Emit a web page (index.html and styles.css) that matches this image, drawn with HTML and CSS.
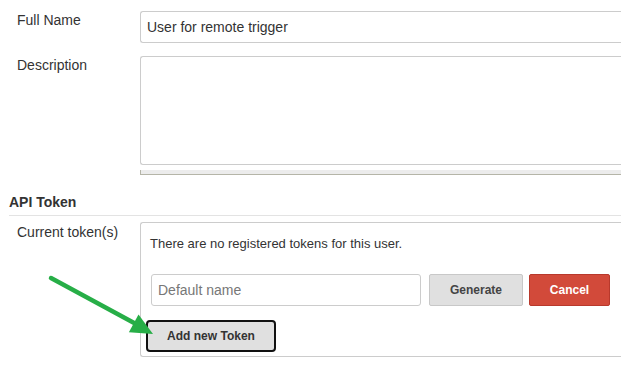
FILE: index.html
```html
<!DOCTYPE html>
<html lang="en">
<head>
  <meta charset="UTF-8">
  <title>User configuration</title>
  <link rel="stylesheet" href="styles.css">
</head>
<body>

  <div class="form">
    <div class="row first">
      <div class="label">Full Name</div>
      <div class="field">
        <input class="text-input wide" type="text" value="User for remote trigger">
      </div>
    </div>

    <div class="row">
      <div class="label">Description</div>
      <div class="field">
        <textarea class="text-area"></textarea>
        <div class="textarea-grip"></div>
      </div>
    </div>

    <div class="section-header">API Token</div>

    <div class="row token-row">
      <div class="label">Current token(s)</div>
      <div class="field token-box">
        <div class="token-note">There are no registered tokens for this user.</div>
        <div class="token-controls">
          <input class="text-input token-name" type="text" placeholder="Default name">
          <button class="btn btn-generate">Generate</button>
          <button class="btn btn-cancel">Cancel</button>
        </div>
        <button class="btn btn-add">Add new Token</button>
      </div>
    </div>
  </div>

  <!-- annotation arrow -->
  <svg class="annotation" width="621" height="369" viewBox="0 0 621 369">
    <line x1="51" y1="278" x2="136" y2="324" stroke="#27ae47" stroke-width="4.5" stroke-linecap="round"/>
    <polygon points="153,334 128.9,332.2 138.5,314.6" fill="#27ae47"/>
  </svg>

</body>
</html>
```

FILE: styles.css
```css
* {
  box-sizing: border-box;
}

body {
  margin: 0;
  width: 621px;
  height: 369px;
  overflow: hidden;
  background: #fff;
  color: #333;
  font-family: 'Liberation Sans', Arial, sans-serif;
  font-size: 14px;
  position: relative;
}

.form {
  width: 621px;
}

.row {
  display: grid;
  grid-template-columns: 140px 1fr;
  align-items: start;
  margin-top: 12px;
}

.row.first {
  margin-top: 10px;
}

.label {
  padding-left: 17px;
  line-height: 20px;
}

.field {
  margin-top: 1px;
  min-width: 0;
}

.text-input {
  display: block;
  width: 100%;
  height: 32px;
  padding: 5px 6px;
  border: 1px solid #ccc;
  border-radius: 3px;
  font-family: inherit;
  font-size: 14px;
  line-height: 20px;
  color: #333;
  background: #fff;
  outline: none;
}

.text-input::placeholder {
  color: #777;
}

.text-area {
  display: block;
  width: 100%;
  height: 109px;
  border: 1px solid #ccc;
  border-radius: 3px;
  resize: none;
  background: #fff;
  outline: none;
}

.textarea-grip {
  margin-top: 5px;
  height: 5px;
  background: #ececec;
  border-left: 1px solid #b5b5a8;
  border-bottom: 1px solid #b5b5a8;
}

.section-header {
  margin: 17px 0 0 9px;
  padding-bottom: 3px;
  border-bottom: 1px solid #e3e3e3;
  font-weight: bold;
  line-height: 20px;
}

.row.token-row {
  margin-top: 5px;
}

.token-row .label {
  padding-top: 1px;
}

.token-box {
  border: 1px solid #ccc;
  border-radius: 3px;
  padding: 12px 0 4px 9px;
}

.token-note {
  font-size: 13px;
  line-height: 18px;
  margin-bottom: 21px;
}

.token-controls {
  display: flex;
  align-items: center;
}

.token-name {
  width: 270px;
  margin-left: 1px;
}

.btn {
  height: 32px;
  border-radius: 2px;
  font-family: inherit;
  font-size: 12px;
  font-weight: bold;
  cursor: pointer;
}

.btn-generate {
  width: 94px;
  margin-left: 8px;
  background: #e0e0e0;
  border: 1px solid #c8c8c8;
  color: #444;
}

.btn-cancel {
  width: 81px;
  margin-left: 6px;
  background: #d24a3a;
  border: 1px solid #b8392c;
  color: #fff;
}

.btn-add {
  display: block;
  width: 130px;
  margin: 14px 0 0 -4px;
  background: #e0e0e0;
  border: 2px solid #111;
  border-radius: 4px;
  color: #333;
}

/* fields run on past the right edge of the shot */
.text-input.wide,
.text-area,
.token-box {
  border-right: none;
  border-top-right-radius: 0;
  border-bottom-right-radius: 0;
}

.annotation {
  position: absolute;
  top: 0;
  left: 0;
  pointer-events: none;
}
```
